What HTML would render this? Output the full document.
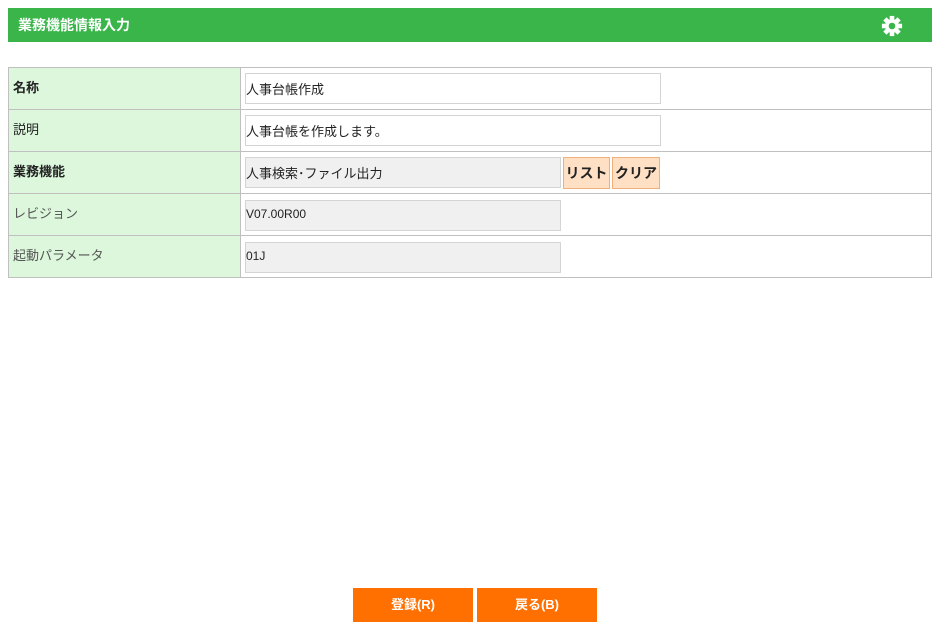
<!DOCTYPE html>
<html><head><meta charset="utf-8"><style>
body{margin:0;background:#fff;font-family:"Liberation Sans","Noto Sans CJK JP",sans-serif;font-size:13px;color:#222;}
.hd{position:absolute;left:8px;top:8px;width:924px;height:34px;background:#39b54a;color:#fff;font-weight:bold;font-size:14px;}
.hd span{position:absolute;left:10px;top:7px;}
.hd svg{position:absolute;left:873px;top:7px;}
.t{position:absolute;left:8px;top:67px;width:924px;border-collapse:collapse;}
.t td{border:1px solid #c0c0c0;padding:0;height:41px;}
.t td.l{width:227px;background:#dcf7dc;padding-left:4px;font-size:13px;}
.t td.l div{position:relative;top:-2px;}
.b{font-weight:bold;}
.in{position:absolute;box-sizing:border-box;border:1px solid #d4d4d4;height:31px;padding:5px 0 0 0;font-size:13px;background:#fff;}
.g{background:#f0f0f0;}
.btn{position:absolute;box-sizing:border-box;height:32px;background:#ffe0c4;border:1px solid #efb07a;font-weight:bold;font-size:14px;padding-top:5px;text-align:center;}
.ob{position:absolute;top:588px;width:120px;height:34px;background:#ff7000;color:#fff;font-weight:bold;font-size:13px;text-align:center;line-height:34px;}
</style></head><body>
<div class="hd"><span>業務機能情報入力</span>
<svg width="22" height="22" viewBox="0 0 24 24"><g fill="#fff"><circle cx="12" cy="12" r="7.5"/>
<rect x="9.5" y="1" width="5" height="22"/><rect x="1" y="9.5" width="22" height="5"/>
<rect x="9.5" y="1" width="5" height="22" transform="rotate(45 12 12)"/><rect x="9.5" y="1" width="5" height="22" transform="rotate(-45 12 12)"/></g>
<circle cx="12" cy="12" r="3.6" fill="#39b54a"/></svg></div>
<table class="t">
<tr><td class="l b"><div>名称</div></td><td></td></tr>
<tr><td class="l"><div>説明</div></td><td></td></tr>
<tr><td class="l b"><div>業務機能</div></td><td></td></tr>
<tr><td class="l" style="color:#555"><div>レビジョン</div></td><td></td></tr>
<tr><td class="l" style="color:#555"><div>起動パラメータ</div></td><td></td></tr>
</table>
<div class="in" style="left:245px;top:73px;width:416px;">人事台帳作成</div>
<div class="in" style="left:245px;top:115px;width:416px;">人事台帳を作成します。</div>
<div class="in g" style="left:245px;top:157px;width:316px;">人事検索･ファイル出力</div>
<div class="btn" style="left:563px;top:157px;width:47px;">リスト</div>
<div class="btn" style="left:612px;top:157px;width:48px;">クリア</div>
<div class="in g" style="left:245px;top:200px;width:316px;font-size:12px;padding-top:6px;">V07.00R00</div>
<div class="in g" style="left:245px;top:242px;width:316px;font-size:12px;padding-top:6px;">01J</div>
<div class="ob" style="left:353px;">登録(R)</div>
<div class="ob" style="left:477px;">戻る(B)</div>
</body></html>
